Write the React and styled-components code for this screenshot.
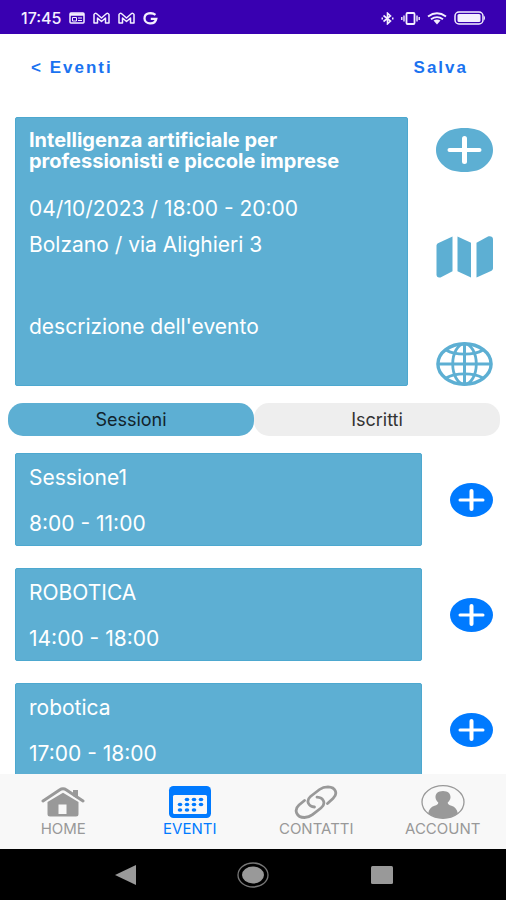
import React, { useState } from "react";
import styled, { createGlobalStyle } from "styled-components";

const SKY = "#5dafd3";
const BLUE = "#007aff";
const GREY = "#999";

const GlobalStyle = createGlobalStyle`
  *, *::before, *::after { box-sizing: border-box; }
  body { margin: 0; background: #fff; font-family: Inter, Roboto, sans-serif; }
  button { font: inherit; border: 0; padding: 0; background: none; cursor: pointer; }
  h1, h2, p, ul { margin: 0; padding: 0; }
  ul { list-style: none; }
  svg { display: block; }
`;

const Screen = styled.div`
  display: flex;
  flex-direction: column;
  height: 100vh;
  background: #fff;
`;

const StatusBar = styled.div`
  display: flex;
  flex: none;
  align-items: center;
  justify-content: space-between;
  height: 34px;
  padding: 2px 20px 0 21px;
  background: #3900b1;
  color: #f4efff;
`;

const StatusGroup = styled.div`
  display: flex;
  align-items: center;
  gap: ${(p) => p.$gap}px;
`;

const Clock = styled.time`
  font-size: 16px;
  line-height: 20px;
  font-weight: 500;
`;

const Header = styled.header`
  display: flex;
  flex: none;
  align-items: center;
  justify-content: space-between;
  height: 68px;
  padding: 0 38px 0 31px;
`;

const HeaderButton = styled.button`
  color: #1a73f0;
  font-family: "Liberation Sans", Arial, sans-serif;
  font-size: 17px;
  line-height: 24px;
  font-weight: 700;
  letter-spacing: 2px;
`;

const Content = styled.main`
  flex: 1;
  min-height: 0;
  overflow: hidden;
  padding-top: 15px;
`;

const EventRow = styled.section`
  display: flex;
  gap: 28px;
  padding: 0 13px 0 15px;
`;

const Card = styled.div`
  flex: 1;
  min-width: 0;
  border: 1px solid #4da8cf;
  border-radius: 2px;
  background: ${SKY};
  color: #fff;
  font-size: 21px;
  line-height: 24px;
`;

const EventCard = styled(Card)`
  padding: 12px 13px 46px;
`;

const EventTitle = styled.h1`
  font-size: 20px;
  line-height: 21px;
  font-weight: 700;
`;

const EventLine = styled.p`
  margin-top: ${(p) => p.$space}px;
`;

const Actions = styled.div`
  display: flex;
  flex: none;
  flex-direction: column;
  justify-content: space-between;
  padding-top: 11px;
`;

const IconButton = styled.button`
  display: block;
  flex: none;
  color: ${(p) => p.$color};
`;

const Tabs = styled.div`
  display: flex;
  margin: 17px 6px 17px 8px;
`;

const Tab = styled.button`
  flex: 1;
  height: 33px;
  border-radius: 15px;
  background: ${(p) => (p.$active ? SKY : "#eeeeee")};
  color: ${(p) => (p.$active ? "#12232b" : "#333")};
  font-size: 18px;
  line-height: 20px;
`;

const SessionList = styled.ul`
  display: flex;
  flex-direction: column;
  gap: 22px;
`;

const SessionRow = styled.li`
  display: flex;
  align-items: center;
  gap: 28px;
  padding: 0 13px 0 15px;
`;

const SessionCard = styled(Card)`
  display: flex;
  flex-direction: column;
  gap: 22px;
  padding: 12px 13px 9px;
`;

const SessionName = styled.h2`
  font-size: inherit;
  font-weight: 400;
`;

const SessionTime = styled.p`
  font-size: inherit;
`;

const TabBar = styled.nav`
  display: grid;
  flex: none;
  grid-template-columns: repeat(4, 1fr);
  height: 75px;
  background: #f8f8f8;
`;

const NavButton = styled.button`
  display: flex;
  flex-direction: column;
  align-items: center;
  padding-top: 11px;
  color: ${(p) => (p.$active ? BLUE : GREY)};
`;

const NavLabel = styled.span`
  font-size: 15px;
  line-height: 20px;
`;

const SystemBar = styled.div`
  display: flex;
  flex: none;
  align-items: center;
  justify-content: space-evenly;
  height: 51px;
  padding: 0 12px;
  background: #000;
`;

function LargePlusIcon() {
  return (
    <svg width="57" height="44" viewBox="0 0 57 44" aria-hidden="true">
      <path
        d="M28.500 0C38 0 45 2 50 7c4.500 4 7 9 7 15s-2.500 11-7 15c-5 5-12 7-21.500 7S12 42 7 37C2.500 33 0 28 0 22S2.500 11 7 7c5-5 12-7 21.500-7z"
        fill="currentColor"
      />
      <path d="M28.500 10.500v23" stroke="#fff" strokeWidth="5" strokeLinecap="round" />
      <path d="M13.500 22h30" stroke="#fff" strokeWidth="4" strokeLinecap="round" />
    </svg>
  );
}

function SmallPlusIcon() {
  return (
    <svg width="43" height="34" viewBox="0 0 43 34" aria-hidden="true">
      <ellipse cx="21.500" cy="17" rx="21.500" ry="17" fill="currentColor" />
      <path d="M21.500 8v18" stroke="#fff" strokeWidth="4" strokeLinecap="round" />
      <path d="M10 17h23" stroke="#fff" strokeWidth="3" strokeLinecap="round" />
    </svg>
  );
}

function MapIcon() {
  return (
    <svg width="57" height="42" viewBox="0 0 57 42" fill="currentColor" aria-hidden="true">
      <path d="M16.500.5v34.800L4.500 41.400C2 42 .5 41 .5 38.500V9.800C.5 8.600 1 7.800 2.500 7z" />
      <path d="M21.500.5 35 6.700v34.800l-13.500-6.200z" />
      <path d="M40.500 41.500V6.700L51.500.8C54.500-.4 57 1 57 3.500v28.700c0 1.200-.6 2-2 2.800z" />
    </svg>
  );
}

function GlobeIcon() {
  return (
    <svg width="57" height="44" viewBox="0 0 57 44" fill="none" stroke="currentColor" strokeWidth="2.800" aria-hidden="true">
      <ellipse cx="28.500" cy="22" rx="26.600" ry="20.200" strokeWidth="3.400" />
      <ellipse cx="28.500" cy="22" rx="11.800" ry="20.200" />
      <path d="M28.500 1.500v41" strokeWidth="3" />
      <path d="M1.500 22h54M10 8c9 5.500 28 5.500 37 0M10 36c9-5.500 28-5.500 37 0" />
    </svg>
  );
}

function HomeIcon() {
  return (
    <svg width="44" height="34" viewBox="0 0 44 34" aria-hidden="true">
      <path d="M32 5h5v9l-5-3z" fill="currentColor" />
      <path d="M2 16 18.500 5Q22 2.600 25.500 5L42 16" fill="none" stroke="currentColor" strokeWidth="3" strokeLinecap="round" />
      <path fillRule="evenodd" d="M6.500 17 22 7.800 37.500 17V29q0 2.500-2.500 2.500H9Q6.500 31.500 6.500 29zM17.500 19.500V29h8v-9.500z" fill="currentColor" />
    </svg>
  );
}

function CalendarIcon() {
  const dots = [
    [19, 14.5], [26, 14.5], [33, 14.5],
    [12, 19.5], [19, 19.5], [26, 19.5], [33, 19.5],
    [12, 25], [19, 25], [26, 25],
  ];
  return (
    <svg width="44" height="34" viewBox="0 0 44 34" aria-hidden="true">
      <rect x="1" y="1" width="42" height="32" rx="4.500" fill="currentColor" />
      <rect x="5" y="10" width="34" height="19" rx="1.500" fill="#f8f8f8" />
      {dots.map(([x, y]) => (
        <ellipse key={`${x}-${y}`} cx={x} cy={y} rx="2.300" ry="1.800" fill="currentColor" />
      ))}
    </svg>
  );
}

function LinkIcon() {
  return (
    <svg width="44" height="34" viewBox="0 0 44 34" fill="none" stroke="currentColor" strokeWidth="2.800" strokeLinecap="round" aria-hidden="true">
      <path d="M33.500 18.500 39 13.500C44 9 42 2 34 1.800c-4 0-6.500 1.200-8.500 2.700l-9 7c-5 4.500-2 10 4 10.500" />
      <path d="M10.500 15.500 5 20c-5.500 5-2.500 12.500 5.500 12.500 3.500 0 6-1.200 8-2.800L27 23c5.500-4.500 2.500-10.500-4-10.800" />
    </svg>
  );
}

function AccountIcon() {
  return (
    <svg width="44" height="34" viewBox="0 0 44 34" aria-hidden="true">
      <ellipse cx="22" cy="17" rx="21" ry="16.300" fill="none" stroke="currentColor" strokeWidth="1.300" />
      <path
        d="M22 6c5 0 7.800 2.800 7.500 6.500-.2 2.200-1.300 3.800-2.800 5 .1 1.800 1.300 2.500 3.800 3.200 3.500 1 5.500 3.600 6.300 7.500Q31 33.300 22 33.300T7.200 28.200c.8-3.900 2.800-6.500 6.300-7.500 2.500-.7 3.700-1.400 3.800-3.200-1.500-1.200-2.600-2.800-2.800-5C14.200 8.800 17 6 22 6z"
        fill="currentColor"
      />
    </svg>
  );
}

function NewsIcon() {
  return (
    <svg width="16" height="12" viewBox="0 0 16 12" aria-hidden="true">
      <rect x="1" y="1" width="14" height="10" rx="1" fill="none" stroke="currentColor" strokeWidth="1.500" />
      <path d="M1 2.500h14" stroke="currentColor" strokeWidth="2.500" />
      <path d="M3.500 5.500h4V9h-4zM9 6h4M9 8.500h4" fill="none" stroke="currentColor" />
    </svg>
  );
}

function MailIcon() {
  return (
    <svg width="17" height="12" viewBox="0 0 17 12" aria-hidden="true">
      <path d="M1 11V2.500Q2 .5 4 2l4.500 4L13 2q2-1.500 3 .5V11h-3.500V6l-4 3.500-4-3.500v5z" fill="none" stroke="currentColor" strokeWidth="1.500" strokeLinejoin="round" />
    </svg>
  );
}

function GoogleIcon() {
  return (
    <svg width="15" height="13" viewBox="0 0 15 13" aria-hidden="true">
      <path d="M12.500 2.800C9 .2 1.500.6 1.500 6.500s10.500 7 11.800.3H7.800" fill="none" stroke="currentColor" strokeWidth="2.300" />
    </svg>
  );
}

function BluetoothIcon() {
  return (
    <svg width="13" height="13" viewBox="0 0 13 13" fill="none" stroke="currentColor" strokeWidth="1.600" aria-hidden="true">
      <path d="M2.500 3.500 9.500 9l-3 2.800V1.200l3 2.800-7 5.500" />
      <path d="M.5 6.500H2M11 6.500h1.500" strokeWidth="2" />
    </svg>
  );
}

function VibrateIcon() {
  return (
    <svg width="19" height="13" viewBox="0 0 19 13" fill="none" stroke="currentColor" strokeWidth="1.800" aria-hidden="true">
      <rect x="5.500" y="1" width="8" height="11" rx="1" />
      <path d="M3 3.500v6M16 3.500v6M.8 5v3M18.200 5v3" strokeWidth="1.400" />
    </svg>
  );
}

function WifiIcon() {
  return (
    <svg width="20" height="13" viewBox="0 0 20 13" aria-hidden="true">
      <path d="M1 4.500q9-6.500 18 0M4 7.200q6-4.200 12 0" fill="none" stroke="currentColor" strokeWidth="1.900" />
      <path d="M6.500 8.500q3.500-2 7 0l-3.500 4z" fill="currentColor" />
    </svg>
  );
}

function BatteryIcon() {
  return (
    <svg width="32" height="14" viewBox="0 0 32 14" aria-hidden="true">
      <rect x="1" y="1" width="28" height="12" rx="4" fill="none" stroke="currentColor" strokeWidth="1.500" />
      <rect x="3.500" y="3" width="23" height="8" rx="1.500" fill="currentColor" />
      <path d="M30 4.500q2 2.500 0 5z" fill="currentColor" />
    </svg>
  );
}

const sessions = [
  { name: "Sessione1", time: "8:00 - 11:00" },
  { name: "ROBOTICA", time: "14:00 - 18:00" },
  { name: "robotica", time: "17:00 - 18:00" },
];

const navItems = [
  { label: "HOME", Icon: HomeIcon },
  { label: "EVENTI", Icon: CalendarIcon },
  { label: "CONTATTI", Icon: LinkIcon },
  { label: "ACCOUNT", Icon: AccountIcon },
];

export default function App() {
  const [tab, setTab] = useState("Sessioni");
  const [page, setPage] = useState("EVENTI");

  return (
    <Screen>
      <GlobalStyle />
      <StatusBar>
        <StatusGroup $gap={8}>
          <Clock>17:45</Clock>
          <NewsIcon />
          <MailIcon />
          <MailIcon />
          <GoogleIcon />
        </StatusGroup>
        <StatusGroup $gap={7}>
          <BluetoothIcon />
          <VibrateIcon />
          <WifiIcon />
          <BatteryIcon />
        </StatusGroup>
      </StatusBar>
      <Header>
        <HeaderButton type="button">&lt; Eventi</HeaderButton>
        <HeaderButton type="button">Salva</HeaderButton>
      </Header>
      <Content>
        <EventRow>
          <EventCard>
            <EventTitle>Intelligenza artificiale per professionisti e piccole imprese</EventTitle>
            <EventLine $space={25}>04/10/2023 / 18:00 - 20:00</EventLine>
            <EventLine $space={12}>Bolzano / via Alighieri 3</EventLine>
            <EventLine $space={58}>descrizione dell'evento</EventLine>
          </EventCard>
          <Actions>
            <IconButton type="button" $color={SKY} aria-label="Aggiungi">
              <LargePlusIcon />
            </IconButton>
            <IconButton type="button" $color={SKY} aria-label="Mappa">
              <MapIcon />
            </IconButton>
            <IconButton type="button" $color={SKY} aria-label="Sito web">
              <GlobeIcon />
            </IconButton>
          </Actions>
        </EventRow>
        <Tabs role="tablist">
          {["Sessioni", "Iscritti"].map((name) => (
            <Tab
              key={name}
              type="button"
              role="tab"
              aria-selected={tab === name}
              $active={tab === name}
              onClick={() => setTab(name)}
            >
              {name}
            </Tab>
          ))}
        </Tabs>
        <SessionList>
          {sessions.map((s) => (
            <SessionRow key={s.name}>
              <SessionCard>
                <SessionName>{s.name}</SessionName>
                <SessionTime>{s.time}</SessionTime>
              </SessionCard>
              <IconButton type="button" $color={BLUE} aria-label={`Aggiungi ${s.name}`}>
                <SmallPlusIcon />
              </IconButton>
            </SessionRow>
          ))}
        </SessionList>
      </Content>
      <TabBar>
        {navItems.map(({ label, Icon }) => (
          <NavButton key={label} type="button" $active={page === label} onClick={() => setPage(label)}>
            <Icon />
            <NavLabel>{label}</NavLabel>
          </NavButton>
        ))}
      </TabBar>
      <SystemBar>
        <IconButton type="button" $color={GREY} aria-label="Indietro">
          <svg width="32" height="32" viewBox="0 0 32 32" fill="currentColor">
            <path d="M6 16 27 6v20z" />
          </svg>
        </IconButton>
        <IconButton type="button" $color={GREY} aria-label="Schermata iniziale">
          <svg width="32" height="32" viewBox="0 0 32 32">
            <ellipse cx="16" cy="16" rx="15" ry="12" fill="none" stroke="#777" strokeWidth="1.300" />
            <ellipse cx="16" cy="16" rx="11" ry="8.500" fill="currentColor" />
          </svg>
        </IconButton>
        <IconButton type="button" $color={GREY} aria-label="App recenti">
          <svg width="32" height="32" viewBox="0 0 32 32">
            <rect x="5" y="7" width="22" height="18" rx="1.500" fill="currentColor" />
          </svg>
        </IconButton>
      </SystemBar>
    </Screen>
  );
}
